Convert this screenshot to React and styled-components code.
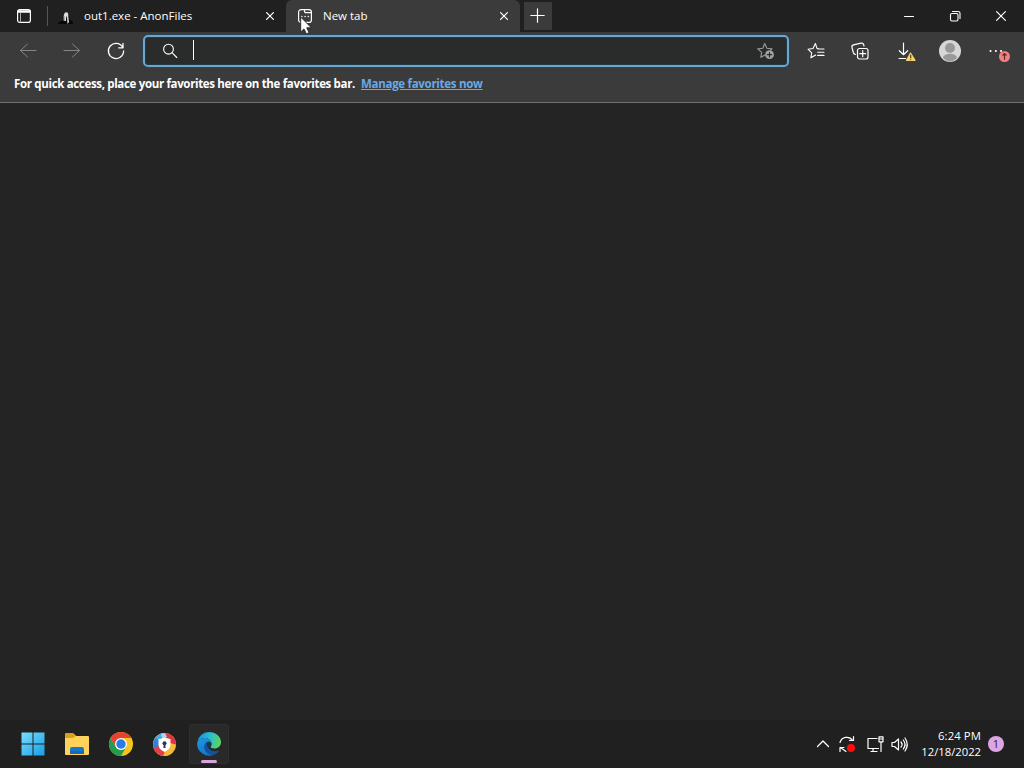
import React from 'react';
import styled, { createGlobalStyle } from 'styled-components';

const GlobalStyle = createGlobalStyle`
  * { box-sizing: border-box; }
  body { margin: 0; overflow: hidden; background: #242424; }
`;
const Desktop = styled.div`
  position: relative;
  width: 1024px;
  height: 768px;
  display: flex;
  flex-direction: column;
  background: #242424;
  color: #fff;
  font: 12px 'Open Sans', 'Noto Sans', sans-serif;
  white-space: nowrap;
  cursor: default;
`;
const TabStrip = styled.header`
  height: 32px;
  flex: none;
  display: flex;
  background: #202020;
`;
const TabActions = styled.div`
  width: 48px;
  display: flex;
  align-items: center;
  padding-left: 16px;
  justify-content: space-between;
`;
const Divider = styled.i`
  width: 1px;
  height: 20px;
  background: #555;
`;
const Tab = styled.div`
  width: ${p => p.$width}px;
  display: flex;
  align-items: center;
  padding: 0 9px 0 ${p => (p.$active ? 11 : 10)}px;
  background: ${p => (p.$active ? '#3b3b3b' : 'transparent')};
  border-radius: 6px 6px 0 0;
`;
const TabTitle = styled.span`
  flex: 1;
  margin-left: ${p => p.$gap}px;
  font-size: 11.5px;
  line-height: 16px;
  letter-spacing: ${p => p.$spacing}px;
`;
const NewTab = styled.button`
  width: 28px;
  height: 28px;
  margin: 2px 0 0 4px;
  padding: 0 1px 1px 0;
  border: 0;
  background: #3b3b3b;
  display: grid;
  place-items: center;
`;
const WindowControls = styled.div`
  margin-left: auto;
  display: flex;
`;
const WindowButton = styled.div`
  width: 46px;
  height: 32px;
  display: grid;
  place-items: center;
`;
const Toolbar = styled.nav`
  height: 38px;
  flex: none;
  display: flex;
  align-items: center;
  padding-left: 6px;
  background: #3b3b3b;
`;
const ToolButton = styled.div`
  width: ${p => p.$width || 44}px;
  height: ${p => p.$height || 38}px;
  flex: none;
  display: grid;
  place-items: center;
`;
const AddressBar = styled.div`
  width: 646px;
  height: 32px;
  margin: 0 5px;
  flex: none;
  display: flex;
  align-items: center;
  padding: 0 12px 0 17px;
  border: 2px solid #6fa5c8;
  border-radius: 5px;
  background: #2a2b2b;
  box-shadow: 0 0 0 1px #294656, inset 0 0 0 1px #213b49;
`;
const Caret = styled.i`
  width: 1px;
  height: 20px;
  margin: 0 auto 2px 15px;
  background: #fff;
`;
const FavoritesBar = styled.div`
  height: 33px;
  flex: none;
  display: flex;
  align-items: flex-start;
  padding: 6px 14px;
  gap: 6px;
  background: #3b3b3b;
  border-bottom: 1px solid #707070;
  font-size: 11.5px;
  line-height: 16px;
`;
const Hint = styled.span`
  font-weight: 700;
  width: 341px;
  letter-spacing: -0.335px;
`;
const ManageLink = styled.a`
  color: #69a9e4;
  font-weight: 700;
  letter-spacing: -0.29px;
  text-decoration: underline;
`;
const Page = styled.main`
  flex: 1;
  background: #242424;
`;
const Taskbar = styled.footer`
  height: 48px;
  flex: none;
  display: flex;
  align-items: center;
  padding-left: 12.5px;
  background: #202020;
`;
const TaskApp = styled.div`
  position: relative;
  width: 40px;
  height: 40px;
  margin-right: 4px;
  border-radius: 4px;
  display: grid;
  place-items: center;
  background: ${p => (p.$active ? '#292929' : 'transparent')};
  box-shadow: ${p => (p.$active ? 'inset 0 0 0 1px #303030' : 'none')};
  &::after {
    content: '';
    display: ${p => (p.$active ? 'block' : 'none')};
    position: absolute;
    left: 12px;
    bottom: 1px;
    width: 16px;
    height: 3px;
    border-radius: 2px;
    background: #d9a3dc;
  }
`;
const Tray = styled.div`
  margin-left: auto;
  display: flex;
  align-items: center;
  height: 48px;
`;
const TraySlot = styled.div`
  width: ${p => p.$width}px;
  display: grid;
  place-items: center;
`;
const Clock = styled.div`
  width: 72px;
  text-align: right;
  font-size: 11.3px;
  line-height: 16px;
`;
const ClockLine = styled.div`
  letter-spacing: ${p => p.$spacing}px;
`;
const Notification = styled.div`
  width: 16px;
  height: 16px;
  margin: 0 20px 0 7px;
  border-radius: 50%;
  background: #dda5e2;
  color: #302034;
  font-size: 11px;
  line-height: 16px;
  text-align: center;
`;
const Pointer = styled.div`
  position: absolute;
  left: 300px;
  top: 16px;
`;
const Svg = styled.svg`
  display: block;
  overflow: visible;
`;

function Line({ w = 18, h = w, color = '#fff', stroke = 1, children }) {
  return (
    <Svg width={w} height={h} viewBox={`0 0 ${w} ${h}`} fill="none" stroke={color} strokeWidth={stroke} strokeLinecap="round" strokeLinejoin="round">
      {children}
    </Svg>
  );
}
const Close = ({ size = 8, stroke = 1.3 }) => (
  <Line w={size} stroke={stroke}><path d={`M.6.6l${size - 1.2} ${size - 1.2}M${size - 0.6}.6L.6 ${size - 0.6}`} /></Line>
);

function Chrome() {
  return (
    <Svg width="24" height="24" viewBox="0 0 24 24">
      <circle cx="12" cy="12" r="12" fill="#f8c51f" />
      <path d="M1.6 6A12 12 0 0 1 22.4 6H12L6.8 15z" fill="#e84033" />
      <path d="M1.6 6A12 12 0 0 0 12 24l5.2-9L12 18 6.8 15z" fill="#259c4d" />
      <circle cx="12" cy="12" r="6" fill="#fff" />
      <circle cx="12" cy="12" r="4.7" fill="#287be8" />
    </Svg>
  );
}

function PrivacyBrowser() {
  return (
    <Svg width="23" height="23" viewBox="0 0 23 23">
      <circle cx="11.5" cy="11.5" r="11.5" fill="#f4ba35" />
      <path d="M8 .6A11.5 11.5 0 0 1 23 11.5L17 10V6l-6-2z" fill="#dc3348" />
      <path d="M8 .6A11.5 11.5 0 0 0 .1 13.500L6 15V8l5-4z" fill="#4ba9e7" />
      <path d="M8 .6l4-.5 2 4-5 1z" fill="#b4d2e9" />
      <path d="M.1 13.500a11.500 11.500 0 0 0 10 9.400L12 18 6 11z" fill="#e33c4d" />
      <path d="M3 5a11 11 0 0 0-2.300 10L6 13V8z" fill="#347fd2" />
      <path d="M11.500 4.300q3 2 6 1.700v5.500c0 3.500-2.300 5.800-6 7.500-3.700-1.700-6-4-6-7.500V6q3 .3 6-1.700z" fill="#fff" />
      <circle cx="11.5" cy="10.3" r="2" fill="#29345f" />
      <path d="M10.700 11h1.600l.3 4h-2.200z" fill="#29345f" />
    </Svg>
  );
}

function Edge() {
  return (
    <Svg width="24" height="24" viewBox="0 0 24 24">
      <defs>
        <linearGradient id="edgeTop" x1="0" y1=".4" x2="1" y2=".6">
          <stop stopColor="#1a93dc" /><stop offset=".5" stopColor="#29bfd0" /><stop offset="1" stopColor="#5fd653" />
        </linearGradient>
        <linearGradient id="edgeLeft" x1="0" y1="0" x2=".5" y2="1">
          <stop stopColor="#1b9be0" /><stop offset="1" stopColor="#1474cc" />
        </linearGradient>
      </defs>
      <path d="M.2 10.500A12 12 0 0 1 12 0c6.800 0 12 4.800 12 10 0 4-3 6.500-6.500 6.500-2.600 0-4-.9-4-1.800 0-.6 1-1 1-2.700C14.500 8.500 11.500 6 8 6 4.500 6 1.500 8 .2 10.500z" fill="url(#edgeTop)" />
      <path d="M.2 10.500C1.500 8 4.500 6 8 6c3.500 0 6.500 2.500 6.500 5.700-.6-1.300-1.800-2-3-2-2.200 0-3.500 2.200-3.300 4.500.3 4 3.800 8 9.300 8.200A12 12 0 0 1 .2 10.500z" fill="url(#edgeLeft)" />
      <path d="M10.300 9.900c-2.500 1.300-3.600 3.800-3 6.700.9 3.700 3.800 6.100 7.700 6.600 3.500-.5 6-2.500 7.500-5-3.800 1.900-8 1.200-10.500-1.500-1.800-2-2.700-4.800-1.700-6.800z" fill="#14529a" />
      <path d="M10.300 9.900c2-.6 3.700.1 4.200 1.800.1 1.500-1 2.200-1 3 0 .9 1.400 1.800 4 1.800-3.400 1.500-7.400-.8-7.700-4.400 0-.8.1-1.500.5-2.200z" fill="#19384c" />
    </Svg>
  );
}

export default function App() {
  return (
    <Desktop>
      <GlobalStyle />
      <TabStrip>
        <TabActions>
          <Line w={16} stroke={1.2}>
            <rect x="1.600" y="1.600" width="12.800" height="12.800" rx="2.200" />
            <path d="M2.500 3.500h11" strokeWidth="2.600" /><path d="M4.500 5.500v8.500" stroke="#a8a8a8" strokeWidth="1" />
          </Line>
          <Divider />
        </TabActions>
        <Tab $width={238}>
          <Svg width="16" height="16" viewBox="0 0 16 16">
            <path d="M0 16c0-2 2-3 4-3l2-2h5c3 1 4 3 4 5z" fill="#080808" />
            <path d="M5.800 7l1-2.200L8.500 4l1.700 1.500v3.300L11 14l-1.500 2L9 9.500 8 8v5H6.200z" fill="#dedede" />
            <path d="M7 4.500h2.500M6 8v5" stroke="#888" />
          </Svg>
          <TabTitle $gap={10} $spacing={0}>out1.exe - AnonFiles</TabTitle>
          <ToolButton $width={14} $height={32}><Close /></ToolButton>
        </Tab>
        <Tab $active $width={234}>
          <Line w={16} stroke={1.2}>
            <rect x="1.600" y="1.600" width="12.800" height="12.800" rx="2.500" />
            <path d="M7.500 1.600v1.600c0 1 .5 1.500 1.500 1.500h5.400" />
            <path d="M4.800 8.500h.2M8 8.500h.2M11.200 8.500h.2" stroke="#ddd" strokeWidth="1.600" />
          </Line>
          <TabTitle $gap={10} $spacing={0}>New tab</TabTitle>
          <ToolButton $width={14} $height={32}><Close /></ToolButton>
        </Tab>
        <NewTab><Line w={15} stroke={1.2}><path d="M7.500 .8v13.400M.8 7.500h13.400" /></Line></NewTab>
        <WindowControls>
          <WindowButton><Line w={10}><path d="M.5 5.500h9" /></Line></WindowButton>
          <WindowButton><Line w={10} stroke={1.1}><rect x=".5" y="2.500" width="7.500" height="7.500" rx="1.500" /><path d="M2.500 .5H8a2 2 0 0 1 2 2v5" /></Line></WindowButton>
          <WindowButton><Close size={10} stroke={1.2} /></WindowButton>
        </WindowControls>
      </TabStrip>

      <Toolbar>
        <ToolButton><Line w={16} color="#858585"><path d="M16 7.500H.5M7.500 1L.5 7.500l7 6.500" /></Line></ToolButton>
        <ToolButton><Line w={16} color="#858585"><path d="M0 7.500h15.500M8.500 1l7 6.500-7 6.500" /></Line></ToolButton>
        <ToolButton><Line w={18} stroke={1.3}><path d="M15.800 5.500A7.600 7.600 0 1 0 16.600 9M16 1.500v4.300h-4.300" /></Line></ToolButton>
        <AddressBar>
          <Line w={16} stroke={1.1}><circle cx="6.500" cy="6.200" r="4.900" /><path d="M10.200 9.900l4.600 4.600" /></Line>
          <Caret />
          <Line w={18} color="#9b9b9b" stroke={1.1}>
            <path d="M8 13l-4.200 2.300.9-5L.7 6.900l5.100-.7L7.700 1.500l2.200 4.700 5.100.7-1.200 1.100" />
            <circle cx="12.500" cy="12.700" r="4.400" fill="#a3a3a3" stroke="none" /><path d="M12.500 10.500v4.400M10.300 12.700h4.400" stroke="#292929" strokeWidth="1.200" />
          </Line>
        </AddressBar>
        <ToolButton><Line w={18} h={18} stroke={1.1}><path d="M11.500 6.700L10 6.400 8.400 1.500 6 6.500l-5 .7 3.700 3.600-.8 5 4.800-2.800M10.700 7h6.300M10.700 10.200h6.300M10.700 13.400h6.300" /></Line></ToolButton>
        <ToolButton><Line w={18} stroke={1.2}><rect x="6.500" y="6.500" width="10.500" height="10.500" rx="2" /><path d="M11.700 8.700v6M8.700 11.700h6M4.500 12.500c-1.300-.2-1.800-.8-2.200-2L1 5.500c-.3-1.500.2-2.300 1.500-2.600L10 1.200c1.400-.3 2.300.2 2.700 1.500l.3 1.300" /></Line></ToolButton>
        <ToolButton $width={47}>
          <Line w={18} stroke={1.2}>
            <path d="M6.500 1v11.500M2.300 8.700l4.200 4 4.200-4M2 16.500h6.500" />
            <path d="M13.500 11L9.500 18.300h8.500z" fill="#f8d36c" stroke="#f8d36c" /><path d="M13.700 13v2.700M13.700 17.500v.1" stroke="#4c3d20" />
          </Line>
        </ToolButton>
        <ToolButton $width={42}>
          <Svg width="22" height="22" viewBox="0 0 22 22"><circle cx="11" cy="11" r="11" fill="#d6d6d6" /><circle cx="11" cy="8" r="5" fill="#999" /><path d="M3.800 17.500c1.200-2.600 3.800-3.800 7.200-3.800s6 1.200 7.200 3.800A10.500 10.500 0 0 1 11 21.500a10.500 10.500 0 0 1-7.200-4z" fill="#999" /></Svg>
        </ToolButton>
        <ToolButton $width={55}>
          <Svg width="22" height="22" viewBox="0 0 22 22"><path d="M2.500 11h.1M7.800 11h.1M13 11h.1" stroke="#fff" strokeWidth="2" strokeLinecap="round" /><circle cx="16.500" cy="16.500" r="5.500" fill="#f08080" /><path d="M16.500 19.700v-6.200m-2 2l2-2 2 2" fill="none" stroke="#5d2929" strokeWidth="1.200" /></Svg>
        </ToolButton>
      </Toolbar>
      <FavoritesBar>
        <Hint>For quick access, place your favorites here on the favorites bar.</Hint>
        <ManageLink>Manage favorites now</ManageLink>
      </FavoritesBar>
      <Page />
      <Taskbar>
        <TaskApp>
          <Svg width="24" height="24" viewBox="0 0 24 24"><defs><linearGradient id="windows" x2="1" y2="1"><stop stopColor="#78dcff" /><stop offset="1" stopColor="#169ee5" /></linearGradient></defs><path d="M.5 .5h11v11H.5zm12 0h11v11h-11zM.5 12.500h11v11H.5zm12 0h11v11h-11z" fill="url(#windows)" /></Svg>
        </TaskApp>
        <TaskApp>
          <Svg width="24" height="24" viewBox="0 0 24 24"><path d="M0 2q0-1 1-1h7l3 2.500V8H0z" fill="#dca117" /><path d="M0 6h8l3-2h12q1 0 1 1v17q0 1-1 1H1q-1 0-1-1z" fill="#ffd25b" /><path d="M5 22v-5q0-2 2-2h10q2 0 2 2v5z" fill="#1679c5" /><path d="M5 19h14v3H5z" fill="#126bb4" /></Svg>
        </TaskApp>
        <TaskApp><Chrome /></TaskApp>
        <TaskApp><PrivacyBrowser /></TaskApp>
        <TaskApp $active><Edge /></TaskApp>
        <Tray>
          <TraySlot $width={20}><Line w={12} stroke={1.3}><path d="M.5 8.500L6 3l5.500 5.500" /></Line></TraySlot>
          <TraySlot $width={28}><Line w={18} stroke={1.2}><path d="M2 7.500a7 7 0 0 1 12.500-2.200M15.500 1.500v4h-4M8 16.500l-5.500-4M2 16.500v-4h4" /><circle cx="13" cy="13" r="4" fill="#ff0b0b" stroke="none" /></Line></TraySlot>
          <TraySlot $width={28}><Line w={17} stroke={1.2}><path d="M10 2.500H1v10h10.500M4 15.500h6M6 12.500v3M12 .8h4v5h-4zM14 6v9.500M12 3h4" /></Line></TraySlot>
          <TraySlot $width={20}><Line w={17} stroke={1.2}><path d="M1 6.500h2.500L7.500 3v11l-4-3.500H1zM10 6q2.200 2.500 0 5M12.300 4q3.500 4.500 0 9M14 2q4.500 6.500 0 13" /></Line></TraySlot>
          <Clock><ClockLine $spacing={0.1}>6:24 PM</ClockLine><ClockLine $spacing={-0.03}>12/18/2022</ClockLine></Clock>
          <Notification>1</Notification>
        </Tray>
      </Taskbar>
      <Pointer><Svg width="12" height="19" viewBox="0 0 12 19"><path d="M.7 1v15l3.300-3.100 2.400 5 2.700-1.300-2.400-4.800h4.600z" fill="#fff" stroke="#171717" strokeWidth=".8" /></Svg></Pointer>
    </Desktop>
  );
}
